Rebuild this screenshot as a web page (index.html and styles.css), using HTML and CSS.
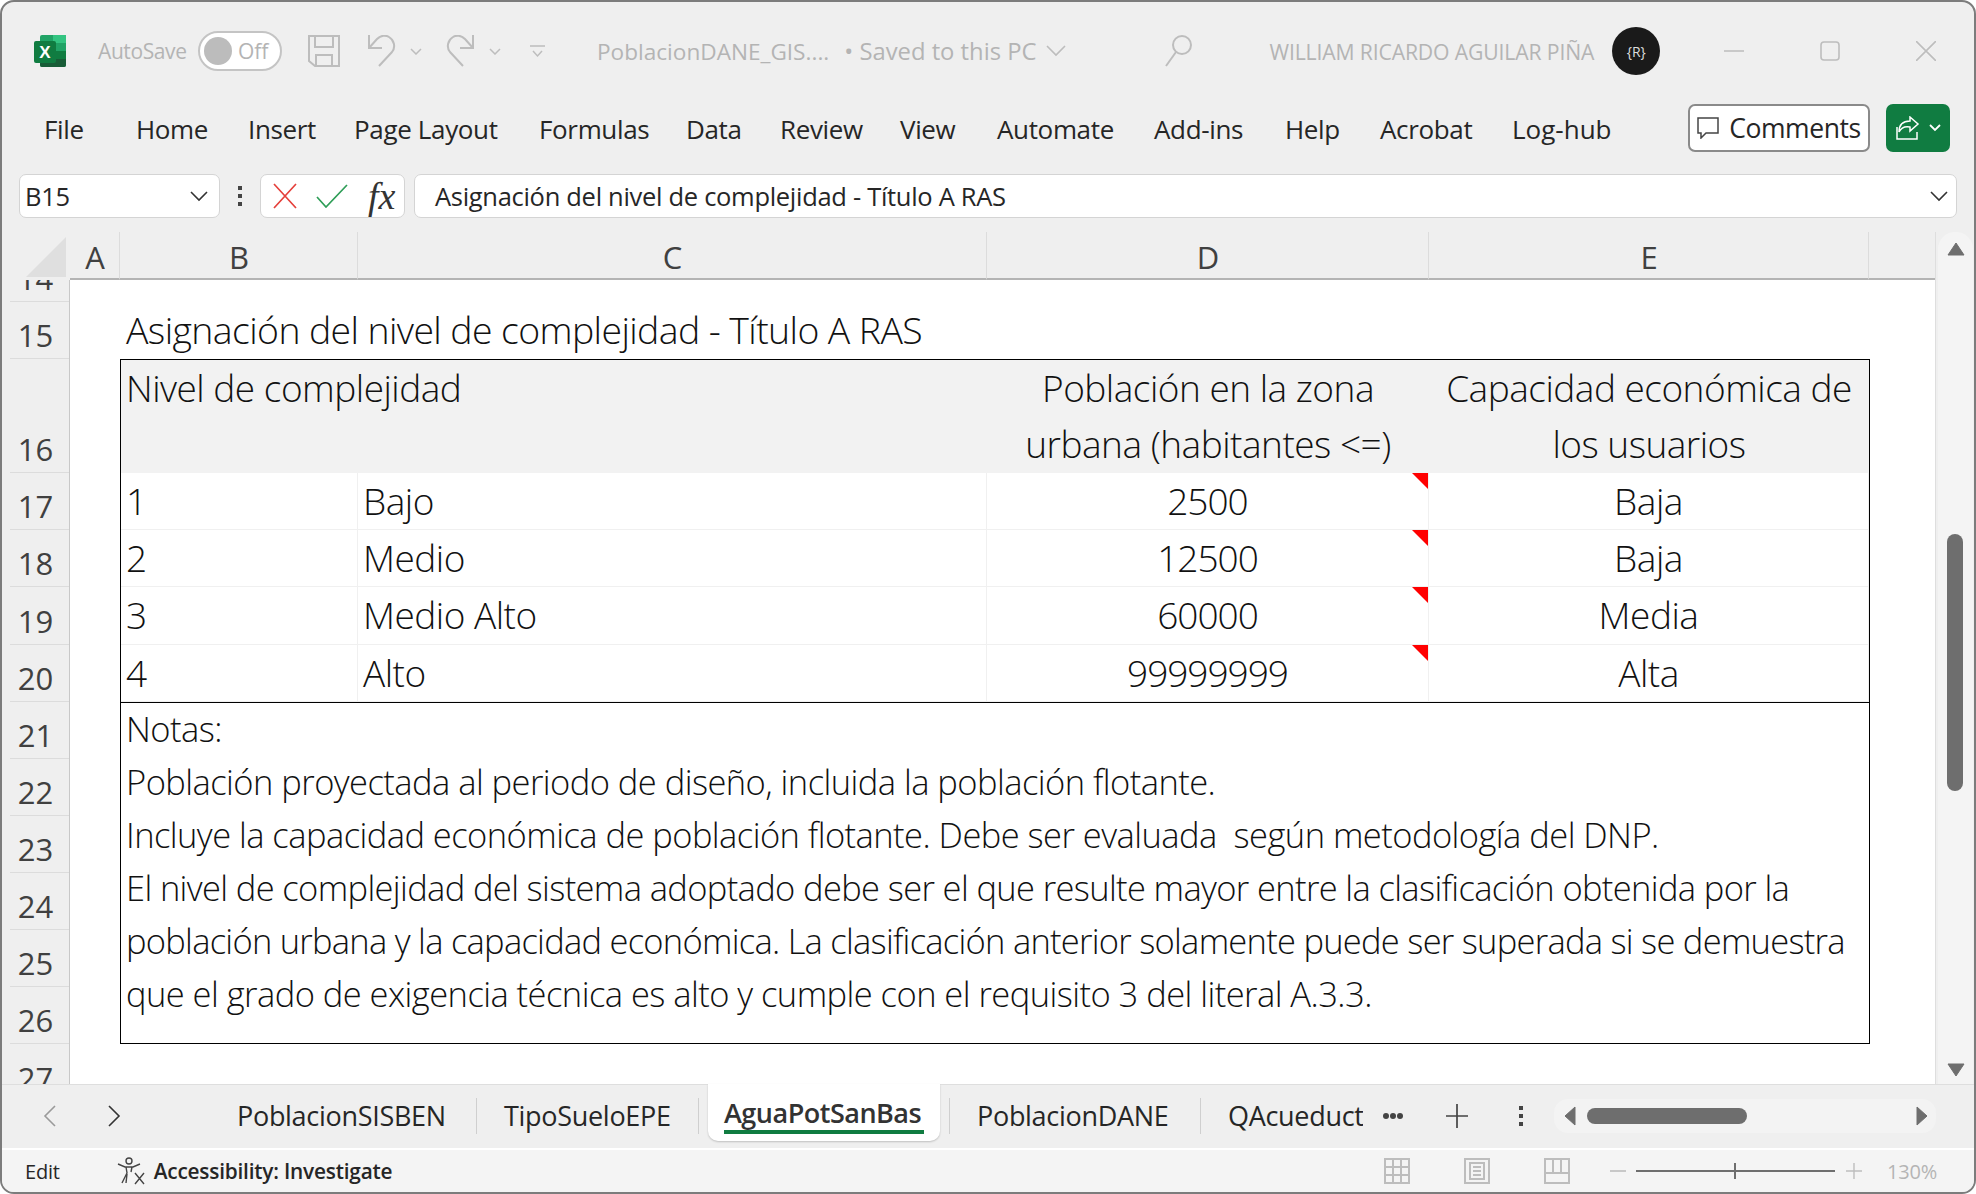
FILE: index.html
```html
<!DOCTYPE html>
<html lang="en">
<head>
    <meta charset="UTF-8">
    <title>PoblacionDANE_GIS - Excel</title>
    <link rel="stylesheet" href="styles.css">
</head>
<body>
    <div class="window">
        <!-- Title bar -->
        <div class="titlebar">
            <svg class="xl-logo" width="32" height="32" viewBox="0 0 32 32">
                <rect x="6" y="0" width="26" height="32" rx="2" fill="#21a366"/>
                <rect x="19" y="0" width="13" height="8" fill="#33c481"/>
                <rect x="19" y="8" width="13" height="8" fill="#21a366"/>
                <rect x="6" y="16" width="26" height="8" fill="#107c41"/>
                <path d="M6 24h26v6a2 2 0 0 1-2 2H8a2 2 0 0 1-2-2z" fill="#185c37"/>
                <rect x="0" y="6" width="22" height="22" rx="2" fill="#107c41"/>
                <text x="11" y="23" text-anchor="middle" class="xl-x">X</text>
            </svg>
            <span class="autosave">AutoSave</span>
            <span class="toggle"><i class="knob"></i><span>Off</span></span>
            <svg class="qat save" width="32" height="32" viewBox="0 0 32 32" fill="none" stroke="#bdbdbd" stroke-width="2">
                <path d="M1 1h30v30H7l-6-5zM7 1v11h18V1M8 31V20h16v11"/>
            </svg>
            <svg class="qat undo" width="28" height="32" viewBox="0 0 28 32" fill="none" stroke="#bdbdbd" stroke-width="2">
                <path d="M1 0v13h13M1 13L9 4c4-4 9-4 12-2 5 3 7 10 3 15L11 31"/>
            </svg>
            <svg class="mini mini-undo" width="12" height="7" viewBox="0 0 12 7" fill="none" stroke="#bdbdbd" stroke-width="1.5"><path d="M1 1l5 5 5-5"/></svg>
            <svg class="qat redo" width="28" height="32" viewBox="0 0 28 32" fill="none" stroke="#bdbdbd" stroke-width="2">
                <path d="M27 0v13H14M27 13l-8-9c-4-4-9-4-12-2C2 5 0 12 4 17l13 14"/>
            </svg>
            <svg class="mini mini-redo" width="12" height="7" viewBox="0 0 12 7" fill="none" stroke="#bdbdbd" stroke-width="1.5"><path d="M1 1l5 5 5-5"/></svg>
            <svg class="qat more" width="15" height="13" viewBox="0 0 15 13" fill="none" stroke="#bdbdbd" stroke-width="1.5">
                <path d="M0 1h15M3 6l4.500 5 4.500-5"/>
            </svg>
            <span class="docname">PoblacionDANE_GIS....</span>
            <span class="saved">&bull; Saved to this PC</span>
            <svg class="saved-caret" width="20" height="12" viewBox="0 0 20 12" fill="none" stroke="#bdbdbd" stroke-width="1.6"><path d="M1 1l9 9 9-9"/></svg>
            <svg class="search" width="27" height="32" viewBox="0 0 27 32" fill="none" stroke="#bdbdbd" stroke-width="2">
                <circle cx="17" cy="10" r="9"/><path d="M11 17L1 31"/>
            </svg>
            <span class="username">WILLIAM RICARDO AGUILAR PIÑA</span>
            <span class="avatar">{R}</span>
            <div class="winctl">
                <svg width="20" height="20" viewBox="0 0 20 20" stroke="#bdbdbd" stroke-width="1.6"><path d="M0 10h20"/></svg>
                <svg width="20" height="20" viewBox="0 0 20 20" fill="none" stroke="#bdbdbd" stroke-width="1.6"><rect x="1" y="1" width="18" height="18" rx="3"/></svg>
                <svg width="20" height="20" viewBox="0 0 20 20" stroke="#bdbdbd" stroke-width="1.6"><path d="M0 0l20 20M20 0L0 20"/></svg>
            </div>
        </div>

        <!-- Ribbon tabs -->
        <div class="ribbon">
            <nav class="menu">
                <span class="m-file">File</span>
                <span class="m-home">Home</span>
                <span class="m-insert">Insert</span>
                <span class="m-layout">Page Layout</span>
                <span class="m-formulas">Formulas</span>
                <span class="m-data">Data</span>
                <span class="m-review">Review</span>
                <span class="m-view">View</span>
                <span class="m-auto">Automate</span>
                <span class="m-addins">Add-ins</span>
                <span class="m-help">Help</span>
                <span class="m-acrobat">Acrobat</span>
                <span class="m-loghub">Log-hub</span>
            </nav>
            <button class="comments">
                <svg width="22" height="22" viewBox="0 0 22 22" fill="none" stroke="#444" stroke-width="1.5">
                    <path d="M1 1h20v15H9l-5 5v-5H1z"/>
                </svg>
                Comments
            </button>
            <button class="share">
                <svg width="24" height="24" viewBox="0 0 24 24" fill="none" stroke="#fff" stroke-width="1.5">
                    <path d="M1 11v12h20v-7M14 1l8 7-8 7v-4c-5-1-9 1-11 5 0-7 4-11 11-11z"/>
                </svg>
                <svg width="12" height="8" viewBox="0 0 12 8" fill="none" stroke="#fff" stroke-width="1.8"><path d="M1 1l5 5 5-5"/></svg>
            </button>
        </div>

        <!-- Formula bar -->
        <div class="formulabar">
            <div class="namebox">
                <span>B15</span>
                <svg width="20" height="12" viewBox="0 0 20 12" fill="none" stroke="#333" stroke-width="1.6"><path d="M2 2l8 8 8-8"/></svg>
            </div>
            <div class="fb-dots"><i></i><i></i><i></i></div>
            <div class="fb-buttons">
                <svg width="26" height="26" viewBox="0 0 26 26" stroke="#e5413c" stroke-width="1.7"><path d="M2 1l22 24M24 1L2 25"/></svg>
                <svg width="32" height="24" viewBox="0 0 32 24" fill="none" stroke="#2f9e58" stroke-width="1.7"><path d="M1 13l9 10L31 1"/></svg>
                <span class="fx">fx</span>
            </div>
            <div class="fb-input">
                <span>Asignación del nivel de complejidad - Título A RAS</span>
                <svg width="20" height="12" viewBox="0 0 20 12" fill="none" stroke="#333" stroke-width="1.6"><path d="M2 2l8 8 8-8"/></svg>
            </div>
        </div>

        <!-- Column headers + sheet + scrollbar -->
        <div class="workarea">
            <div class="grid-area">
                <div class="colhead">
                    <div class="corner"><svg width="40" height="40" viewBox="0 0 40 40"><path d="M40 0v40H0z" fill="#dfdfdf"/></svg></div>
                    <div class="col col-a">A</div>
                    <div class="col col-b">B</div>
                    <div class="col col-c">C</div>
                    <div class="col col-d">D</div>
                    <div class="col col-e">E</div>
                    <div class="col-rest"></div>
                </div>
                <div class="sheet">
                    <div class="rowhead">
                        <div class="rn rn-14">14</div>
                        <div class="rn">15</div>
                        <div class="rn rn-16">16</div>
                        <div class="rn">17</div>
                        <div class="rn">18</div>
                        <div class="rn rn-19">19</div>
                        <div class="rn">20</div>
                        <div class="rn">21</div>
                        <div class="rn">22</div>
                        <div class="rn">23</div>
                        <div class="rn">24</div>
                        <div class="rn">25</div>
                        <div class="rn">26</div>
                        <div class="rn rn-27">27</div>
                    </div>
                    <div class="cells">
                        <div class="sheet-title">Asignación del nivel de complejidad - Título A RAS</div>
                        <div class="ras">
                            <div class="th th-nivel">Nivel de complejidad</div>
                            <div class="th th-center">Población en la zona<br>urbana (habitantes &lt;=)</div>
                            <div class="th th-center">Capacidad económica de<br>los usuarios</div>

                            <div class="td">1</div><div class="td">Bajo</div><div class="td ctr note">2500</div><div class="td ctr">Baja</div>
                            <div class="td">2</div><div class="td">Medio</div><div class="td ctr note">12500</div><div class="td ctr">Baja</div>
                            <div class="td">3</div><div class="td">Medio Alto</div><div class="td ctr note">60000</div><div class="td ctr">Media</div>
                            <div class="td">4</div><div class="td">Alto</div><div class="td ctr note">99999999</div><div class="td ctr">Alta</div>

                            <div class="notes">
                                <div>Notas:</div>
                                <div>Población proyectada al periodo de diseño, incluida la población flotante.</div>
                                <div>Incluye la capacidad económica de población flotante. Debe ser evaluada&nbsp; según metodología del DNP.</div>
                                <div class="tight">El nivel de complejidad del sistema adoptado debe ser el que resulte mayor entre la clasificación obtenida por la</div>
                                <div class="tighter">población urbana y la capacidad económica. La clasificación anterior solamente puede ser superada si se demuestra</div>
                                <div>que el grado de exigencia técnica es alto y cumple con el requisito 3 del literal A.3.3.</div>
                            </div>
                        </div>
                    </div>
                </div>
            </div>
            <div class="vscroll">
                <svg class="arrow" width="20" height="14" viewBox="0 0 20 14"><path d="M10 1l8 12H2z" fill="#6e6e6e" stroke="#6e6e6e" stroke-linejoin="round"/></svg>
                <svg class="arrow" width="20" height="14" viewBox="0 0 20 14"><path d="M10 13L2 1h16z" fill="#6e6e6e" stroke="#6e6e6e" stroke-linejoin="round"/></svg>
                <div class="vthumb"></div>
            </div>
        </div>

        <!-- Sheet tabs -->
        <div class="tabbar">
            <svg class="tab-nav nav-prev" width="14" height="22" viewBox="0 0 14 22" fill="none" stroke="#9a9a9a" stroke-width="1.6"><path d="M12 1L2 11l10 10"/></svg>
            <svg class="tab-nav nav-next" width="14" height="22" viewBox="0 0 14 22" fill="none" stroke="#333" stroke-width="1.6"><path d="M2 1l10 10L2 21"/></svg>
            <div class="tabs">
                <span class="tab t-sisben">PoblacionSISBEN</span>
                <span class="tab t-suelo">TipoSueloEPE</span>
                <span class="tab-active"><span>AguaPotSanBas</span></span>
                <span class="tab t-dane">PoblacionDANE</span>
                <span class="tab t-qacu">QAcueduct</span>
            </div>
            <div class="tab-more"><i></i><i></i><i></i></div>
            <svg class="tab-add" width="22" height="24" viewBox="0 0 22 24" stroke="#444" stroke-width="1.7"><path d="M11 0v24M0 12h22"/></svg>
            <div class="fb-dots tab-dots"><i></i><i></i><i></i></div>
            <div class="hscroll">
                <svg width="14" height="20" viewBox="0 0 14 20"><path d="M2 10l10-9v18z" fill="#6e6e6e" stroke="#6e6e6e" stroke-linejoin="round"/></svg>
                <div class="hthumb"></div>
                <svg class="h-right" width="14" height="20" viewBox="0 0 14 20"><path d="M12 10L2 1v18z" fill="#6e6e6e" stroke="#6e6e6e" stroke-linejoin="round"/></svg>
            </div>
        </div>

        <!-- Status bar -->
        <div class="statusbar">
            <span class="st-edit">Edit</span>
            <svg class="st-acc" width="30" height="28" viewBox="0 0 30 28" fill="none" stroke="#444" stroke-width="1.4">
                <circle cx="12" cy="4" r="3"/>
                <path d="M1 7l7 3 8 0 7-3M9 10l1 6-5 10M15 10l-1 5M18 16l9 11M27 16L18 27M10 17l-1 9"/>
            </svg>
            <span class="st-acc-text">Accessibility: Investigate</span>
            <div class="st-right">
                <svg class="v-normal" width="26" height="26" viewBox="0 0 26 26" fill="none" stroke="#bdbdbd" stroke-width="2">
                    <path d="M1 1h24v24H1zM9 1v24M17 1v24M1 9h24M1 17h24"/>
                </svg>
                <svg class="v-page" width="26" height="26" viewBox="0 0 26 26" fill="none" stroke="#bdbdbd" stroke-width="2">
                    <path d="M1 1h24v24H1zM6 5h14v16H6zM9 9h8M9 13h8M9 17h8"/>
                </svg>
                <svg class="v-break" width="26" height="26" viewBox="0 0 26 26" fill="none" stroke="#bdbdbd" stroke-width="2">
                    <path d="M1 1h24v24H1zM9 1v14M17 1v14M1 15h24"/>
                </svg>
                <span class="z-minus"></span>
                <div class="zoomslider"><i></i></div>
                <svg class="z-plus" width="16" height="16" viewBox="0 0 16 16" stroke="#bdbdbd" stroke-width="1.4"><path d="M8 0v16M0 8h16"/></svg>
                <span class="z-pct">130%</span>
            </div>
        </div>
    </div>
</body>
</html>
```

FILE: styles.css
```css
html, body {
    margin: 0;
    padding: 0;
    height: 100%;
    background: #fff;
}

body {
    font-family: 'Open Sans', 'Noto Sans', sans-serif;
    color: #262626;
}

.window {
    width: 1976px;
    height: 1194px;
    box-sizing: border-box;
    border: 2px solid #7c7c7c;
    border-radius: 14px;
    overflow: hidden;
    background: #efefef;
    display: flex;
    flex-direction: column;
}

/* Title bar */
.titlebar {
    height: 98px;
    flex: none;
    display: flex;
    align-items: center;
    padding-left: 32px;
    font-size: 21px;
    color: #b4b4b4;
}

.xl-logo { margin-right: 32px; flex: none; }

.xl-x {
    font-family: 'Liberation Sans', sans-serif;
    font-weight: bold;
    font-size: 17px;
    fill: #fff;
}

.autosave { width: 87px; letter-spacing: -0.4px; flex: none; }

.toggle {
    margin-left: 13px;
    width: 84px;
    height: 40px;
    flex: none;
    box-sizing: border-box;
    border: 2px solid #c4c4c4;
    border-radius: 20px;
    background: #fff;
    display: flex;
    align-items: center;
    padding-left: 4px;
    font-size: 21px;
}

.knob {
    width: 28px;
    height: 28px;
    border-radius: 50%;
    background: #bcbcbc;
    margin-right: 6px;
}

.qat, .mini { flex: none; }
.save { margin-left: 26px; }
.undo { margin-left: 28px; }
.mini-undo { margin-left: 14px; }
.redo { margin-left: 24px; }
.mini-redo { margin-left: 15px; }
.more { margin-left: 29px; }

.docname { margin-left: 52px; font-size: 22.6px; flex: none; }
.saved { margin-left: 15px; font-size: 23.8px; flex: none; }
.saved-caret { margin-left: 9px; flex: none; }
.search { margin-left: 99px; flex: none; }
.username { margin-left: 78px; font-size: 21.2px; letter-spacing: -0.15px; flex: none; }

.avatar {
    margin-left: 18px;
    width: 48px;
    height: 48px;
    flex: none;
    border-radius: 50%;
    background: #1a1a1a;
    color: #ddd;
    font-size: 14px;
    display: flex;
    align-items: center;
    justify-content: center;
}

.winctl {
    margin-left: auto;
    margin-right: 38px;
    display: flex;
    gap: 76px;
}

/* Ribbon */
.ribbon {
    height: 74px;
    flex: none;
    box-sizing: border-box;
    padding-top: 4px;
    display: flex;
    align-items: flex-start;
    font-size: 26px;
}

.menu {
    display: flex;
    letter-spacing: -0.35px;
    width: 1686px;
    line-height: 50px;
    flex: none;
}

.menu span { flex: none; }
.m-file { margin-left: 42px; width: 92px; }
.m-home { width: 112px; }
.m-insert { width: 106px; }
.m-layout { width: 185px; }
.m-formulas { width: 147px; }
.m-data { width: 94px; }
.m-review { width: 120px; }
.m-view { width: 97px; }
.m-auto { width: 157px; }
.m-addins { width: 131px; }
.m-help { width: 95px; }
.m-acrobat { width: 132px; }
.m-loghub { letter-spacing: 0; }

.comments {
    width: 182px;
    height: 48px;
    flex: none;
    border: 2px solid #8a8a8a;
    border-radius: 7px;
    background: #fff;
    display: flex;
    align-items: center;
    justify-content: center;
    gap: 10px;
    padding: 0;
    font: 26.5px 'Open Sans', sans-serif;
    letter-spacing: -0.4px;
    color: #262626;
}

.share {
    margin-left: 16px;
    width: 64px;
    height: 48px;
    flex: none;
    border: 0;
    border-radius: 7px;
    background: #107c41;
    display: flex;
    align-items: center;
    gap: 9px;
    padding: 0 0 0 10px;
}

/* Formula bar */
.formulabar {
    height: 44px;
    flex: none;
    display: flex;
    align-items: stretch;
    padding-left: 17px;
    font-size: 25.5px;
    letter-spacing: -0.3px;
}

.namebox, .fb-buttons, .fb-input {
    box-sizing: border-box;
    background: #fff;
    border: 1px solid #d4d4d4;
    border-radius: 7px;
    display: flex;
    align-items: center;
    flex: none;
}

.namebox {
    width: 201px;
    padding: 0 10px 0 5px;
    justify-content: space-between;
}

.fb-dots {
    width: 40px;
    flex: none;
    display: flex;
    flex-direction: column;
    align-items: center;
    justify-content: center;
    gap: 4px;
}

.fb-dots i {
    width: 4px;
    height: 4px;
    background: #444;
    display: block;
}

.fb-buttons {
    width: 145px;
    padding-left: 11px;
    gap: 20px;
}

.fb-buttons svg:nth-child(2) { margin-left: -2px; }

.fx {
    font-family: 'Liberation Serif', serif;
    font-style: italic;
    font-size: 38px;
    line-height: 40px;
    color: #333;
    margin-left: 0;
    letter-spacing: 0;
}

.fb-input {
    margin-left: 9px;
    width: 1543px;
    padding: 0 7px 0 20px;
    justify-content: space-between;
}

/* Work area */
.workarea {
    flex: 1;
    min-height: 0;
    margin-top: 14px;
    display: flex;
}

.grid-area {
    width: 1933px;
    flex: none;
    display: flex;
    flex-direction: column;
    min-height: 0;
    border-right: 1px solid #dedede;
    box-sizing: content-box;
}

.colhead {
    height: 48px;
    flex: none;
    display: flex;
    font-size: 31px;
    color: #404040;
}

.corner {
    width: 68px;
    flex: none;
    display: flex;
    justify-content: flex-end;
    align-items: flex-end;
    padding: 0 4px 3px 0;
    box-sizing: border-box;
}

.col, .col-rest {
    box-sizing: border-box;
    border-bottom: 2px solid #b4b4b4;
}

.col {
    flex: none;
    border-right: 1px solid #dcdcdc;
    text-align: center;
    line-height: 51px;
    padding-left: 1px;
}

.col-a { width: 50px; }
.col-b { width: 238px; }
.col-c { width: 629px; }
.col-d { width: 442px; }
.col-e { width: 440px; }
.col-rest { flex: 1; }

.sheet {
    flex: 1;
    min-height: 0;
    display: flex;
    overflow: hidden;
}

.rowhead {
    width: 68px;
    flex: none;
    box-sizing: border-box;
    border-right: 1px solid #c8c8c8;
    font-size: 31px;
    color: #404040;
}

.rn {
    height: 57px;
    box-sizing: border-box;
    border-bottom: 1px solid #dcdcdc;
    margin-left: 8px;
    padding-right: 8px;
    display: flex;
    align-items: flex-end;
    justify-content: center;
    line-height: 46px;
    overflow: hidden;
}

.rn-14 { height: 22px; }
.rn-16 { height: 114px; }
.rn-19 { height: 58px; }
.rn-27 { border-bottom: 0; }

.cells {
    flex: 1;
    background: #fff;
    padding-left: 50px;
    padding-top: 22px;
    font-size: 37px;
    font-weight: 300;
    color: #111;
    letter-spacing: -0.5px;
}

.sheet-title {
    height: 57px;
    box-sizing: border-box;
    padding-left: 6px;
    line-height: 56px;
    font-size: 37.4px;
    letter-spacing: -0.6px;
}

.ras {
    width: 1750px;
    box-sizing: border-box;
    border: 1px solid #000;
    display: grid;
    grid-template-columns: 237px 629px 442px 440px;
    grid-template-rows: 113px 57px 57px 58px 57px 341px;
}

.th {
    background: #f2f2f2;
    line-height: 55.5px;
}

.th-nivel { grid-column: span 2; padding-left: 5px; }
.th-center { text-align: center; }

.td {
    box-sizing: border-box;
    border-right: 1px solid #f0f0f0;
    border-bottom: 1px solid #f0f0f0;
    padding-left: 5px;
    line-height: 56px;
    position: relative;
}

.ctr { text-align: center; padding-left: 0; }

.note { letter-spacing: -1px; }

.note::after {
    content: "";
    position: absolute;
    top: 0;
    right: 0;
    border-top: 16px solid #f00;
    border-left: 16px solid transparent;
}

.notes {
    grid-column: 1 / -1;
    box-sizing: border-box;
    border-top: 1px solid #000;
    padding-left: 5px;
    font-size: 34.5px;
    line-height: 53px;
    letter-spacing: -0.55px;
    white-space: nowrap;
}

.notes div:first-child { margin-top: -1px; }
.notes .tight { letter-spacing: -0.64px; }
.notes .tighter { letter-spacing: -0.74px; }

/* Scrollbar */
.vscroll {
    width: 35px;
    flex: none;
    margin-left: 2px;
    box-sizing: border-box;
    background: #f4f4f4;
    border-radius: 17px 17px 0 0;
    display: flex;
    flex-direction: column;
    justify-content: space-between;
    align-items: center;
    padding: 10px 0 7px;
    position: relative;
}

.vthumb {
    position: absolute;
    top: 302px;
    left: 9px;
    width: 16px;
    height: 257px;
    border-radius: 8px;
    background: #6e6e6e;
}

/* Sheet tabs */
.tabbar {
    height: 64px;
    flex: none;
    display: flex;
    align-items: center;
    border-top: 1px solid #dedede;
    padding-bottom: 2px;
    font-size: 27px;
    letter-spacing: -0.3px;
    box-sizing: border-box;
}

.nav-prev { margin-left: 41px; flex: none; }
.nav-next { margin-left: 50px; flex: none; }

.tabs {
    margin-left: 116px;
    display: flex;
    align-items: center;
    height: 100%;
    flex: none;
}

.tab {
    flex: none;
    height: 36px;
    line-height: 36px;
    box-sizing: border-box;
    white-space: nowrap;
    overflow: hidden;
}

.t-sisben { width: 240px; border-right: 1px solid #cfcfcf; }
.t-suelo { width: 222px; padding-left: 27px; border-right: 1px solid #cfcfcf; }
.t-dane { width: 252px; margin-left: 9px; padding-left: 27px; border-left: 1px solid #cfcfcf; border-right: 1px solid #cfcfcf; }
.t-qacu { width: 162px; padding-left: 27px; }

.tab-active {
    flex: none;
    align-self: flex-start;
    margin: -1px 0 0 9px;
    height: 57px;
    width: 232px;
    box-sizing: border-box;
    background: #fff;
    border-radius: 0 0 10px 10px;
    box-shadow: 0 1px 2px rgba(0, 0, 0, 0.2);
    padding: 8px 16px 0;
    font-weight: 600;
    font-size: 27px;
    color: #333;
    letter-spacing: -0.5px;
}

.tab-active span {
    display: block;
    box-sizing: border-box;
    height: 42px;
    line-height: 42px;
    border-bottom: 4px solid #107c41;
    white-space: nowrap;
}

.tab-more {
    display: flex;
    gap: 1px;
    margin-left: 20px;
    flex: none;
}

.tab-more i {
    width: 6px;
    height: 6px;
    border-radius: 50%;
    background: #444;
    display: block;
}

.tab-add { margin-left: 43px; flex: none; }
.tab-dots { margin-left: 33px; }

.hscroll {
    margin-left: 13px;
    width: 382px;
    height: 34px;
    flex: none;
    box-sizing: border-box;
    border-radius: 14px;
    background: #f3f3f3;
    display: flex;
    align-items: center;
    padding: 0 7px 0 9px;
}

.hthumb {
    width: 160px;
    height: 16px;
    border-radius: 8px;
    background: #6e6e6e;
    margin-left: 10px;
}

.h-right { margin-left: auto; }

/* Status bar */
.statusbar {
    height: 44px;
    flex: none;
    background: #f4f4f4;
    border-top: 2px solid #fff;
    box-sizing: border-box;
    display: flex;
    align-items: center;
    font-size: 20px;
    letter-spacing: -0.2px;
}

.st-edit { margin-left: 23px; }
.st-acc { margin-left: 57px; }
.st-acc-text { margin-left: 7px; font-weight: 600; font-size: 20.8px; }

.st-right {
    margin-left: auto;
    display: flex;
    align-items: center;
    color: #b4b4b4;
}

.v-page { margin-left: 54px; }
.v-break { margin-left: 54px; }

.z-minus {
    margin-left: 40px;
    width: 16px;
    height: 2px;
    background: #c8c8c8;
}

.zoomslider {
    margin-left: 10px;
    width: 199px;
    height: 2px;
    background: #6e6e6e;
    position: relative;
}

.zoomslider i {
    position: absolute;
    left: 98px;
    top: -7px;
    width: 2px;
    height: 16px;
    background: #6e6e6e;
}

.z-plus { margin-left: 11px; }
.z-pct { margin-left: 25px; margin-right: 37px; font-size: 20px; }
```
